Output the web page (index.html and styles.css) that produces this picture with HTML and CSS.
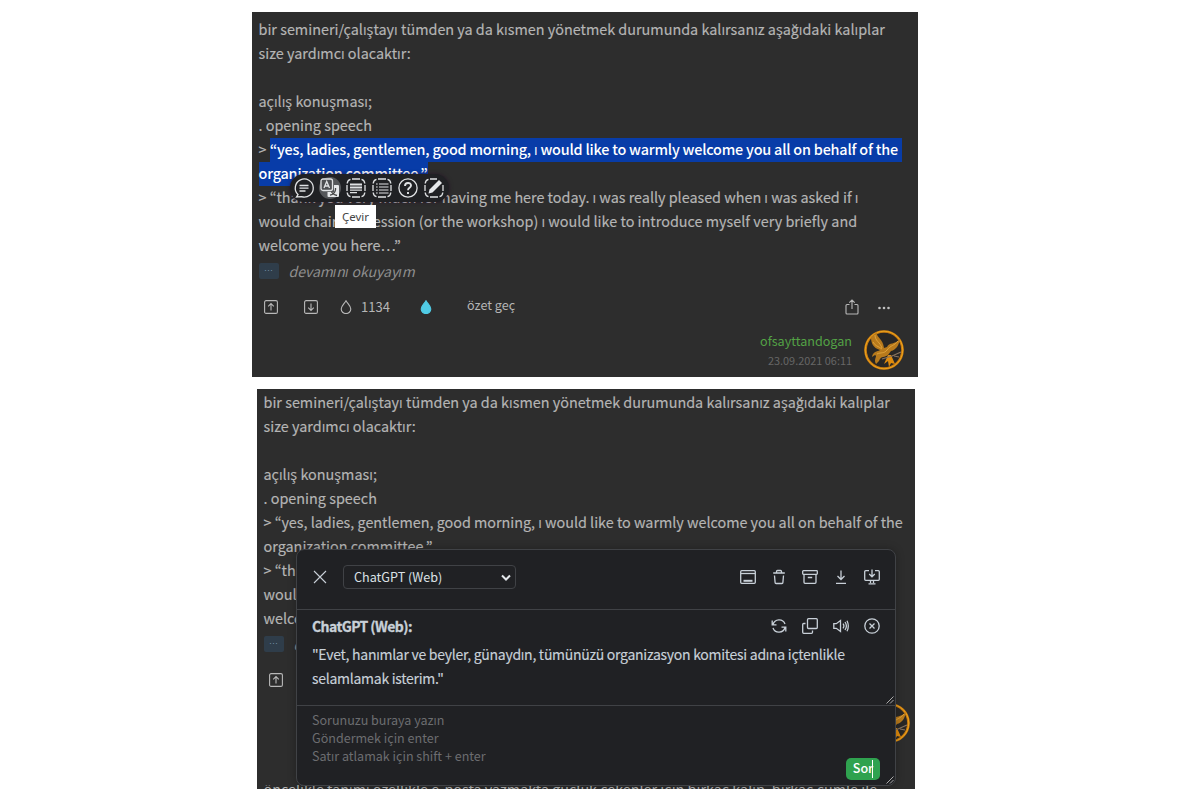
FILE: index.html
```
<!DOCTYPE html>
<html lang="tr">
<head>
<meta charset="utf-8">
<title>ChatGPT</title>
<link rel="stylesheet" href="styles.css">
</head>
<body>
<svg width="0" height="0" class="defs">
  <symbol id="up" viewBox="0 0 14 14"><rect x=".6" y=".6" width="12.8" height="12.8" rx="1.5"/><path d="M7 10.5V4M4.2 6.3L7 3.5l2.8 2.8"/></symbol>
  <symbol id="down" viewBox="0 0 14 14"><rect x=".6" y=".6" width="12.8" height="12.8" rx="1.5"/><path d="M7 3.5V10M4.2 7.7L7 10.5l2.8-2.8"/></symbol>
  <symbol id="drop" viewBox="0 0 12 14"><path d="M6 .8C4.500 3.600 1.200 6 1.200 9A4.600 4.400 0 0 0 10.800 9C10.800 6 7.500 3.600 6 .8z"/></symbol>
  <symbol id="bird" viewBox="0 0 40 40"><circle cx="20" cy="20" r="18.500" fill="#292725" stroke="#c87a10" stroke-width="2.600"/><circle cx="20" cy="20" r="18.800" fill="none" stroke="#eea51c" stroke-width="1"/><path d="M7 7L13 2C12 8 19 8 20 18L23 17C25 12 31 15 36 9C35 15 32 20 27 21L24 25C21 28 17 25 15 31L12 34C9 29 14 26 11 25L8 27C9 21 13 22 16 20C9 18 7 13 7 7z" fill="#b87a1c"/><path d="M11 5c0 6 5 7 7 13M9 12c2 4 5 4 9 7M34 11c-4 5-7 4-11 9M13 24c4-2 7 0 10-4" fill="none" stroke="#e2a63e" stroke-width=".9"/><path d="M24 25L20 34l4-3 1 6 2-4 4 1-4-9z" fill="#df8b0d"/><path d="M18 29L28 26 37 22M30 26l5 1" fill="none" stroke="#8b7560" stroke-width="1.100"/></symbol>
</svg>
<main class="page">
  <section class="shot first">
    <div class="entry">
      <p>bir semineri/çalıştayı tümden ya da kısmen yönetmek durumunda kalırsanız aşağıdaki kalıplar</p>
      <p>size yardımcı olacaktır:</p>
      <p>&nbsp;</p>
      <p>açılış konuşması;</p>
      <p>. opening speech</p>
      <p>&gt; <span class="mark end">“yes, ladies, gentlemen, good morning, ı would like to warmly welcome you all on behalf of the</span></p>
      <p><span class="mark">organization committee.”</span></p>
      <p class="tight">&gt; “thank you very much for having me here today. ı was really pleased when ı was asked if ı</p>
      <p>would chair the session (or the workshop) ı would like to introduce myself very briefly and</p>
      <p>welcome you here…”</p>
    </div>
    <div class="more"><b>···</b><i>devamını okuyayım</i></div>
    <div class="actions">
      <svg class="ic a1"><use href="#up"/></svg><svg class="ic a2"><use href="#down"/></svg><svg class="ic drop"><use href="#drop"/></svg><span class="count">1134</span><svg class="ic drop blue"><use href="#drop"/></svg><span class="ozet">özet geç</span>
      <svg class="ic share" viewBox="0 0 14 16"><path d="M4.500 5.500H2a1 1 0 0 0-1 1V14a1 1 0 0 0 1 1h10a1 1 0 0 0 1-1V6.500a1 1 0 0 0-1-1H9.500M7 10V1.200M4.300 3.700L7 1l2.700 2.700"/></svg>
      <svg class="dots" viewBox="0 0 12 4"><circle cx="1.500" cy="2" r="1.300"/><circle cx="6" cy="2" r="1.300"/><circle cx="10.500" cy="2" r="1.300"/></svg>
    </div>
    <div class="author"><div><div class="name">ofsayttandogan</div><div class="date">23.09.2021 06:11</div></div><svg class="avatar"><use href="#bird"/></svg></div>
    <div class="toolbar">
      <svg viewBox="0 0 20 20"><path d="M4 16.500a9 9 0 1 1 3.500 2.100L2.500 19zM5.500 7.500h9M5.500 10.200h9M5.500 13h6"/></svg>
      <svg class="on" viewBox="0 0 20 20"><rect x="1" y="1" width="11.500" height="11.500" rx="2" fill="#4d4f52"/><path d="M4 10l2.700-6.500L9.500 10M5 8h3.500"/><path class="solid" d="M14 7H18a1 1 0 0 1 1 1v10a1 1 0 0 1-1 1H8.500a1 1 0 0 1-1-1v-4H14z"/><path d="M10 17.200c3-.5 5-2.500 5.500-5.500M11.500 14c1 1.500 3 3 5.500 3.500M15.500 10v2" stroke="#444"/></svg>
      <svg viewBox="0 0 20 20"><path d="M6 1h8M6 19h8M1 7v6M19 7v6M1.200 5.500Q1.500 2 4.500 1.300M18.800 5.500Q18.500 2 15.500 1.300M1.200 14.500Q1.500 18 4.500 18.700M18.800 14.500Q18.500 18 15.500 18.700"/><path d="M4 6.500h12M4 9.500h12" stroke-width="1.900"/><path d="M4 12.200h12M4 14.700h7"/></svg>
      <svg viewBox="0 0 20 20"><path d="M6 1h8M6 19h8M1 7v6M19 7v6M1.200 5.500Q1.500 2 4.500 1.300M18.800 5.500Q18.500 2 15.500 1.300M1.200 14.500Q1.500 18 4.500 18.700M18.800 14.500Q18.500 18 15.500 18.700"/><path d="M4 6h1.700M7 6h9.500M4 9h1.700M7 9h9.500M4 12h1.700M7 12h9.500M4 15h1.700M7 15h9.500" stroke-width="1.200"/></svg>
      <svg viewBox="0 0 20 20"><circle cx="10" cy="10" r="9.100"/><path d="M7 8c0-4 6-4 6-.5C13 10 10 9.500 10 12.200M10 14v2" stroke-width="1.900"/></svg>
      <svg viewBox="0 0 20 20"><path d="M13 1H6M1.200 5.500Q1.500 2 4.500 1.300M1 7v6M1.200 14.500Q1.500 18 4.500 18.700M6 19h8M15.500 18.700Q18.500 18 18.800 14.500M19 13V7"/><path class="solid" d="M4.500 15.500l1-4L15 2l3 3-9.500 9.500z"/></svg>
    </div>
    <div class="tip">Çevir</div>
  </section>
  <section class="shot second">
    <div class="entry">
      <p>bir semineri/çalıştayı tümden ya da kısmen yönetmek durumunda kalırsanız aşağıdaki kalıplar</p>
      <p>size yardımcı olacaktır:</p>
      <p>&nbsp;</p>
      <p>açılış konuşması;</p>
      <p>. opening speech</p>
      <p class="tight">&gt; “yes, ladies, gentlemen, good morning, ı would like to warmly welcome you all on behalf of the</p>
      <p>organization committee.”</p>
      <p>&gt; “thank</p>
      <p>would</p>
      <p>welco</p>
    </div>
    <div class="more"><b>···</b><i>de</i></div>
    <div class="actions"><svg class="ic a1"><use href="#up"/></svg></div>
    <svg class="avatar low"><use href="#bird"/></svg>
    <div class="next"><span>öncelikle tanımı özellikle e-posta yazmakta güçlük çekenler için birkaç kalıp, birkaç cümle ile</span></div>
    <div class="panel">
      <div class="head">
        <svg class="pi x" viewBox="0 0 16 16"><path d="M2 2l12 12M14 2L2 14"/></svg>
        <div class="select"><span>ChatGPT (Web)</span><svg viewBox="0 0 10 7"><path d="M1 1.500l4 4 4-4"/></svg></div>
        <div class="icons">
          <svg class="pi" viewBox="0 0 16 16"><rect x=".7" y="1.700" width="14.600" height="12.600" rx="1"/><path d="M1 4.500h14"/><path d="M3.500 11.800h9" stroke-width="2"/></svg>
          <svg class="pi" viewBox="0 0 16 16"><path d="M2.200 4h11.600M5.500 3.800V2.500a1 1 0 0 1 1-1h3a1 1 0 0 1 1 1v1.300M3.500 6.500l.6 7a1 1 0 0 0 1 1h5.800a1 1 0 0 0 1-1l.6-7"/></svg>
          <svg class="pi" viewBox="0 0 16 16"><rect x=".7" y="1.700" width="14.600" height="3.600" rx=".7"/><path d="M2 5.500v7.800a1 1 0 0 0 1 1h10a1 1 0 0 0 1-1V5.500M5.800 8.500h4.400"/></svg>
          <svg class="pi" viewBox="0 0 16 16"><path d="M8 1.500v9M4.500 7L8 10.500 11.500 7M3 14.300h10"/></svg>
          <svg class="pi" viewBox="0 0 16 16"><path d="M5 1.700H1.700a1 1 0 0 0-1 1v7.600a1 1 0 0 0 1 1h12.600a1 1 0 0 0 1-1V2.700a1 1 0 0 0-1-1H11M8 .5v7M5.200 5L8 7.800 10.800 5M6.500 11.500V14M9.500 11.500V14M4.500 14.800h7"/></svg>
        </div>
      </div>
      <div class="answer">
        <div class="who"><strong>ChatGPT (Web):</strong>
          <div class="icons">
            <svg class="pi" viewBox="0 0 16 16"><path d="M2 6.500A6.300 6.300 0 0 1 14 6M14 9.500a6.300 6.300 0 0 1-12 .5M1.200 2.500v4.300h4.300M14.800 13.500V9.200h-4.300"/></svg>
            <svg class="pi" viewBox="0 0 16 16"><rect x="5.500" y=".7" width="9.800" height="9.800" rx="1"/><path d="M3.500 5.500H1.700a1 1 0 0 0-1 1v7.800a1 1 0 0 0 1 1h7.800a1 1 0 0 0 1-1v-1.800"/></svg>
            <svg class="pi" viewBox="0 0 16 16"><path d="M.8 5.700v4.600h2.500L7.500 13.500v-11L3.300 5.700zM10 5.700q1.800 2.300 0 4.600M12 4q2.800 4 0 8M14 2.700q2.600 5.300 0 10.600"/></svg>
            <svg class="pi" viewBox="0 0 16 16"><circle cx="8" cy="8" r="7.200"/><path d="M5.500 5.500l5 5M10.500 5.500l-5 5"/></svg>
          </div></div>
        <div class="text">"Evet, hanımlar ve beyler, günaydın, tümünüzü organizasyon komitesi adına içtenlikle<br>selamlamak isterim."</div>
        <svg class="grip" viewBox="0 0 8 8"><path d="M.5 7.500l7-7M4 7.500L7.500 4"/></svg>
      </div>
      <div class="ask">
        <div>Sorunuzu buraya yazın</div><div>Göndermek için enter</div><div>Satır atlamak için shift + enter</div>
        <div class="send">Sor</div>
        <svg class="grip" viewBox="0 0 8 8"><path d="M.5 7.500l7-7M4 7.500L7.500 4"/></svg>
      </div>
    </div>
  </section>
</main>
</body>
</html>
```
FILE: styles.css
```
* { box-sizing: border-box; }
body { margin: 0; background: #fff; font-family: "Noto Sans CJK KR", "Open Sans", sans-serif; }
.defs { position: absolute; }
.page { padding: 12px 0 0 252px; height: 800px; overflow: hidden; }
.shot { position: relative; overflow: hidden; background: #2d2d2d; color: #b5b5b5; padding-left: 6.500px; }
.first { width: 666px; height: 365px; padding-top: 6px; }
.second { width: 658px; height: 400px; margin: 12px 0 0 5px; padding-top: 2px; }
.entry { font-size: 14.400px; line-height: 22px; white-space: nowrap; -webkit-text-stroke: .15px; }
.entry p { margin: 0; height: 24px; }
.entry .tight { letter-spacing: -.025px; }
.mark { display: inline-block; height: 24px; background: #083ca8; color: #fff; font-weight: 500; letter-spacing: -.2px; -webkit-text-stroke: 0; }
.end { padding-right: 4px; }
.more { display: flex; align-items: center; gap: 10px; height: 24px; margin-top: 1px; font-size: 14px; line-height: 24px; color: #8f8f8f; }
.more b { width: 20px; height: 16px; border-radius: 2px; background: #2f3d4a; color: #7590a8; font: 9px/15px "Liberation Sans", sans-serif; text-align: center; }
.actions { display: flex; align-items: center; height: 24px; margin-top: 11.500px; padding-left: 5.500px; font-size: 13px; line-height: 22px; }
.ic { width: 14px; height: 14px; fill: none; stroke: #b8b8b8; stroke-width: 1.100; flex: none; }
.a2 { margin-left: 26px; }
.drop { width: 12px; margin-left: 22px; }
.count { margin-left: 9px; width: 28px; padding-top: 1px; }
.blue { fill: #50cbe5; stroke: #50cbe5; margin-left: 31px; }
.ozet { margin-left: 35px; font-size: 12.600px; padding-bottom: 3px; }
.share { height: 16px; margin-left: auto; margin-top: 1px; }
.dots { width: 12px; height: 4px; margin: 3px 28px 0 19px; fill: #c0c0c0; }
.author { display: flex; justify-content: flex-end; gap: 12px; padding: 11.500px 14px 0 0; text-align: right; }
.name { font-size: 12.600px; line-height: 21px; color: #53a245; }
.date { font-size: 10.900px; line-height: 19px; color: #666; }
.avatar { width: 40px; height: 40px; }
.low { position: absolute; right: 5px; top: 314px; }
.toolbar { position: absolute; left: 38px; top: 162px; width: 159px; height: 28px; border-radius: 14px; background: #202124; box-shadow: 0 0 4px #2028; display: flex; align-items: center; gap: 6px; padding-left: 4px; }
.toolbar svg { width: 20px; height: 20px; fill: none; stroke: #e0e2e4; stroke-width: 1.300; overflow: visible; }
.toolbar .on { background: #55575a; border-radius: 50%; box-shadow: 0 0 0 1px #55575a; }
.toolbar .solid { fill: #e6e8ea; stroke: none; }
.tip { position: absolute; left: 83px; top: 193px; width: 41px; height: 23px; background: #fff; color: #454545; font: 11.500px/24px "Noto Sans", sans-serif; text-align: center; }
.next { position: absolute; left: 6.500px; top: 396px; height: 4px; overflow: hidden; font-size: 14.370px; line-height: 24px; white-space: nowrap; }
.next span { display: block; margin-top: -8px; }
.panel { position: absolute; left: 39px; top: 160px; width: 600px; height: 237px; border: 1px solid #404246; border-radius: 8px; background: #202124; box-shadow: 0 0 8px #0004; color: #c8d0d8; }
.head { display: flex; align-items: center; height: 60px; border-bottom: 1px solid #404246; padding: 0 15px 5px 15px; }
.pi { width: 16px; height: 16px; fill: none; stroke: #c8d0d8; stroke-width: 1.300; }
.x { stroke-width: 1.100; }
.select { display: flex; align-items: center; justify-content: space-between; margin-left: 15px; width: 173px; height: 24px; border: 1px solid #404246; border-radius: 4px; padding: 0 4px 0 10px; font-size: 12.600px; line-height: 20px; color: #dce1e6; }
.select svg { width: 10px; height: 7px; fill: none; stroke: #e4e8ec; stroke-width: 2; }
.icons { margin-left: auto; display: flex; gap: 15px; }
.answer { position: relative; height: 96px; border-bottom: 1px solid #404246; padding: 4px 15px 0; }
.who { display: flex; align-items: center; height: 24px; font-size: 14px; line-height: 22px; letter-spacing: -.590px; }
.who strong { padding-bottom: 1px; -webkit-text-stroke: .3px; }
.text { margin-top: 4px; font-size: 14px; line-height: 24px; letter-spacing: -.270px; -webkit-text-stroke: .15px; }
.ask { padding: 5px 15px; font-size: 12.550px; line-height: 18px; color: #6c6d70; white-space: nowrap; }
.send { position: absolute; right: 15px; bottom: 5px; width: 34px; height: 22px; border-radius: 5px; background: #2fa24f; color: #fff; font-weight: 500; line-height: 20px; text-align: center; }
.send::after { content: ""; position: absolute; right: 7px; top: 2px; width: 1px; height: 18px; background: #fff; }
.grip { position: absolute; right: 1px; bottom: 1px; width: 8px; height: 8px; stroke: #aaa; fill: none; }
```
